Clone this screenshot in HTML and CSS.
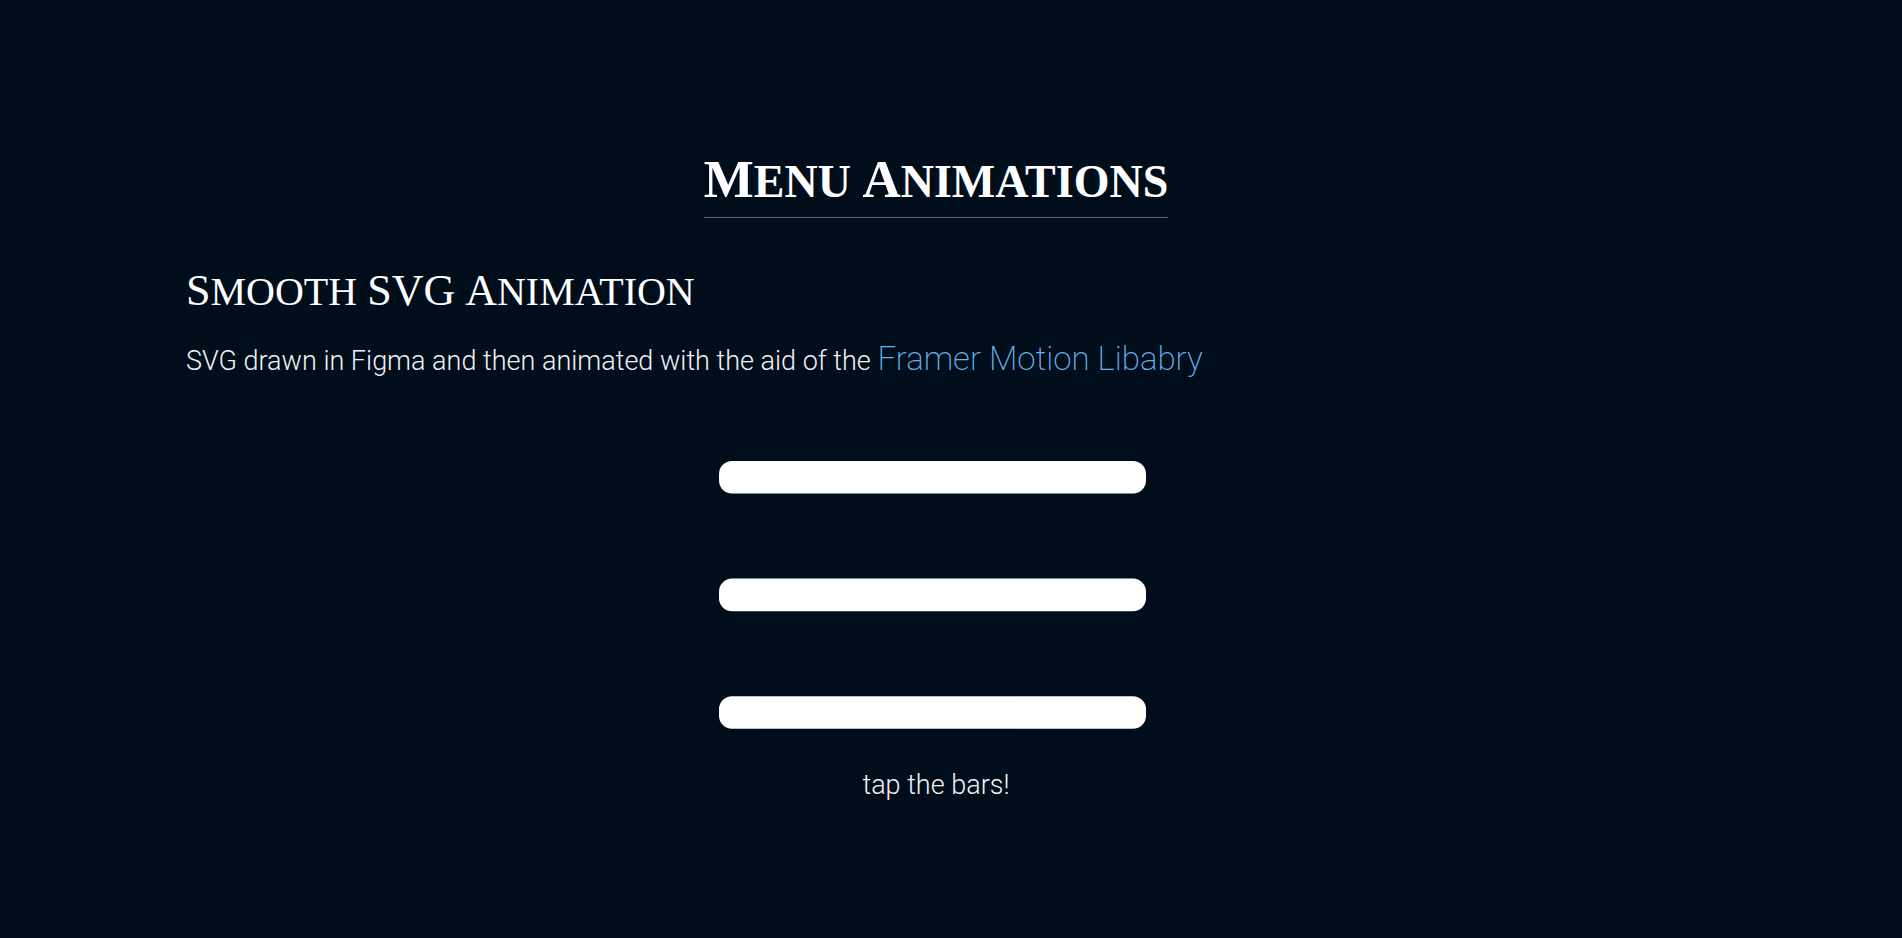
FILE: index.html
```html
<!DOCTYPE html>
<html lang="en">
<head>
<meta charset="utf-8">
<meta name="viewport" content="width=device-width, initial-scale=1">
<title>Menu Animations</title>
<link rel="stylesheet" href="styles.css">
</head>
<body>
<main class="page">
  <h1 class="title"><span class="title-cap">M</span>ENU <span class="title-cap">A</span>NIMATIONS</h1>
  <section class="demo">
    <h2 class="subtitle"><span class="subtitle-cap">S</span>MOOTH <span class="subtitle-cap">SVG</span> <span class="subtitle-cap">A</span>NIMATION</h2>
    <p class="text">SVG drawn in Figma and then animated with the aid of the <a class="link" href="#">Framer Motion Libabry</a></p>
    <div class="stage">
      <button class="menu" type="button" aria-label="Menu">
        <svg class="bars" viewBox="0 0 427 268" fill="#fff" aria-hidden="true">
          <rect width="427" height="32.6" rx="13"/>
          <rect y="117.6" width="427" height="32.6" rx="13"/>
          <rect y="235.2" width="427" height="32.6" rx="13"/>
        </svg>
      </button>
      <p class="text hint">tap the bars!</p>
    </div>
  </section>
</main>
</body>
</html>
```
FILE: styles.css
```css
body {
  margin: 0;
  background: #000d1b;
  color: #fff;
  font-family: Roboto, sans-serif;
  font-weight: 300;
}

.page {
  display: flex;
  flex-direction: column;
  padding: 147px 216px 0 186px;
}

.title,
.subtitle {
  margin: 0;
  font-family: "Liberation Serif", serif;
}

.title {
  align-self: center;
  padding-bottom: 3px;
  border-bottom: 1px solid #56616e;
  font-size: 46px;
  line-height: 64px;
}

.title-cap {
  font-size: 53px;
}

.demo {
  padding-top: 43px;
}

.subtitle {
  font-size: 40px;
  font-weight: 400;
  line-height: 60px;
}

.subtitle-cap {
  font-size: 44px;
}

.text {
  margin: 0;
  color: #f0f2f5;
  font-size: 27px;
  line-height: 40px;
}

.subtitle + .text {
  padding-top: 17px;
}

.link {
  color: #66b2ea;
  font-size: 33px;
  font-weight: 200;
  text-decoration: none;
}

.stage {
  display: flex;
  flex-direction: column;
  align-items: center;
  padding-top: 80px;
}

.menu {
  padding: 0 8px 0 0;
  border: 0;
  background: none;
  cursor: pointer;
}

.bars {
  display: block;
  width: 427px;
}

.hint {
  padding-top: 36px;
}
```
